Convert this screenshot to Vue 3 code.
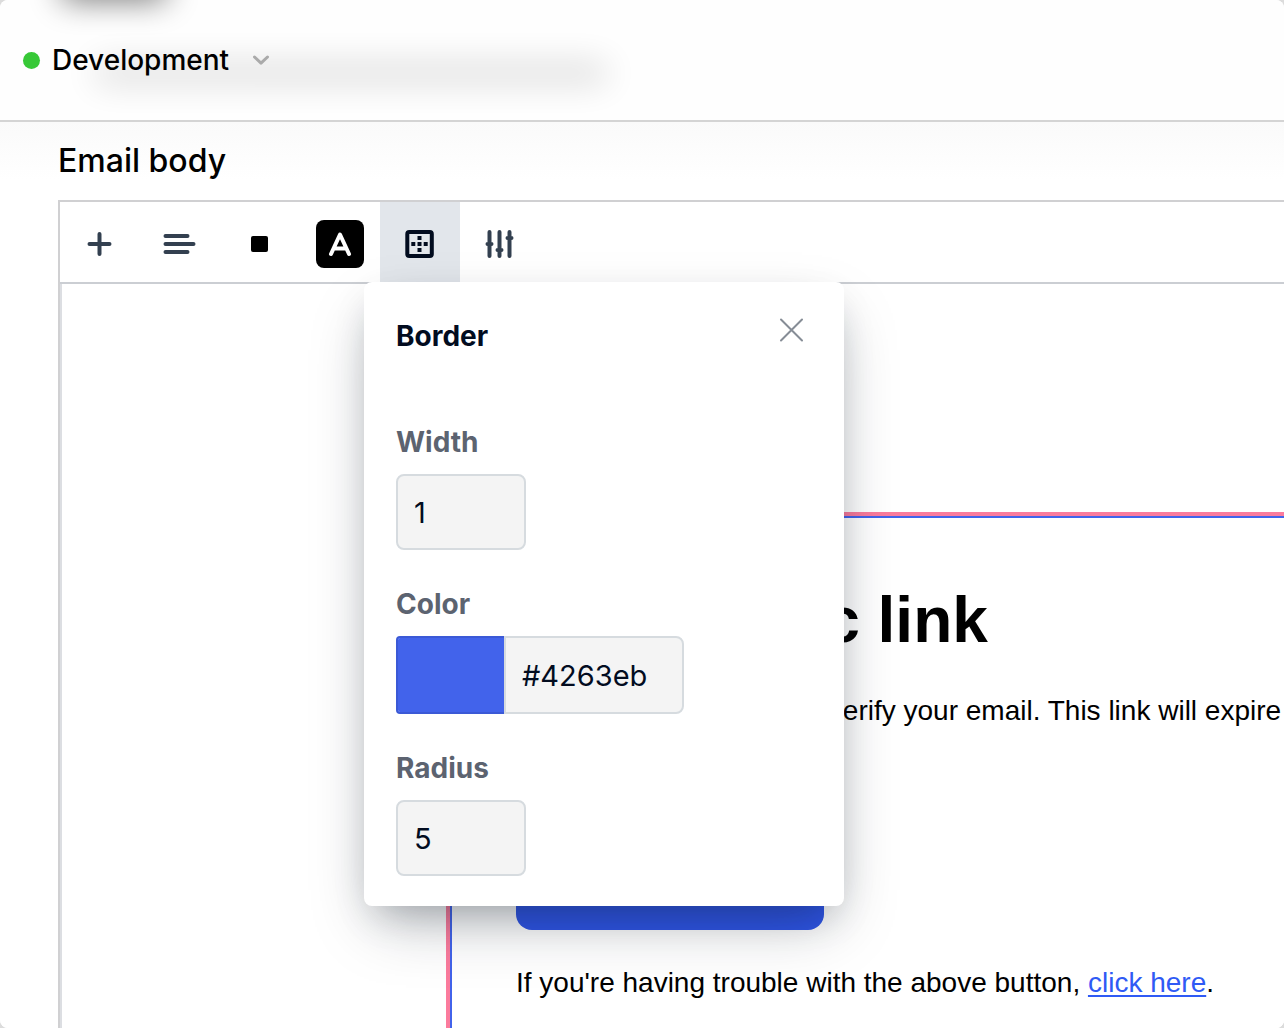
<script setup>
import { ref } from 'vue'

const borderWidth = ref('1')
const borderColor = ref('#4263eb')
const borderRadius = ref('5')
const popoverOpen = ref(true)
</script>

<template>
  <div class="window">
    <header class="topbar">
      <div class="ghost ghost-title"></div>
      <div class="ghost ghost-text"></div>
      <button class="environment" type="button">
        <span class="status"></span>
        <span>Development</span>
        <svg class="chevron" width="20" height="20" viewBox="0 0 20 20" aria-hidden="true">
          <path d="M3.5 7 10 13.2 16.500 7" />
        </svg>
      </button>
    </header>

    <main class="content">
      <h2 class="section-title">Email body</h2>

      <section class="editor">
        <div class="toolbar">
          <button class="tool" type="button" aria-label="Add block">
            <svg class="line-icon" width="40" height="40" viewBox="0 0 40 40">
              <path d="M19.500 10v20M9.500 20h20" />
            </svg>
          </button>
          <button class="tool" type="button" aria-label="Align">
            <svg class="line-icon" width="40" height="40" viewBox="0 0 40 40">
              <path d="M5.500 12h22M5.500 20h28M5.500 28h22" />
            </svg>
          </button>
          <button class="tool" type="button" aria-label="Background color">
            <svg width="40" height="40" viewBox="0 0 40 40">
              <rect x="11" y="12" width="17" height="16" rx="2" />
            </svg>
          </button>
          <button class="tool" type="button" aria-label="Text color">
            <svg class="letter-icon" width="48" height="48" viewBox="0 0 48 48">
              <rect width="48" height="48" rx="8" />
              <path d="M15 34 24 14.500 33 34M18.500 28.500h11" />
            </svg>
          </button>
          <div class="tool-group">
            <button
              class="tool active"
              type="button"
              aria-label="Border"
              @click="popoverOpen = !popoverOpen"
            >
              <svg width="40" height="40" viewBox="0 0 40 40">
                <rect class="frame" x="7.300" y="8" width="24.500" height="24" rx="2" />
                <path
                  class="dots"
                  d="M17.500 12h4v4h-4zM11.300 18h4v4h-4zM17.500 18h4v4h-4zM23.700 18h4v4h-4zM17.500 24h4v4h-4z"
                />
              </svg>
            </button>

            <form v-if="popoverOpen" class="popover" @submit.prevent>
              <div class="popover-head">
                <h3 class="popover-title">Border</h3>
                <button
                  class="close"
                  type="button"
                  aria-label="Close"
                  @click="popoverOpen = false"
                >
                  <svg width="40" height="40" viewBox="0 0 40 40">
                    <path d="M9 9.500l21 21M30 9.500l-21 21" />
                  </svg>
                </button>
              </div>
              <div class="fields">
                <div class="field">
                  <label for="border-width">Width</label>
                  <input id="border-width" v-model="borderWidth" class="box small" type="text" />
                </div>
                <div class="field">
                  <label for="border-color">Color</label>
                  <div class="color-row">
                    <input
                      v-model="borderColor"
                      class="swatch"
                      type="color"
                      aria-label="Pick border color"
                    />
                    <input id="border-color" v-model="borderColor" class="box hex" type="text" />
                  </div>
                </div>
                <div class="field">
                  <label for="border-radius">Radius</label>
                  <input id="border-radius" v-model="borderRadius" class="box small" type="text" />
                </div>
              </div>
            </form>
          </div>
          <button class="tool" type="button" aria-label="Settings">
            <svg class="line-icon" width="40" height="40" viewBox="0 0 40 40">
              <path d="M9.500 8v24M19.500 8v24M29.500 8v24M7.500 20h4M17.500 26h4M27.500 14h4" />
            </svg>
          </button>
        </div>

        <div class="canvas">
          <article class="email">
            <h1>Your magic link</h1>
            <p class="intro">Click the button below to verify your email. This link will expire</p>
            <button class="cta" type="button" aria-label="Verify"></button>
            <p>If you're having trouble with the above button, <a href="#">click here</a>.</p>
          </article>
        </div>
      </section>
    </main>
  </div>
</template>

<style>
body {
  margin: 0;
  background: #dcdcdc;
}
</style>

<style scoped>
* {
  box-sizing: border-box;
}

.window {
  display: flex;
  flex-direction: column;
  height: 100vh;
  overflow: hidden;
  border-radius: 8px;
  background: #fff;
  color: #000;
  font-family: Inter, "Liberation Sans", sans-serif;
}

h1,
h2,
h3,
p {
  margin: 0;
}

button {
  border: 0;
  padding: 0;
  background: none;
  color: inherit;
  font: inherit;
  cursor: pointer;
}

.topbar {
  position: relative;
  flex: none;
  display: flex;
  align-items: center;
  height: 122px;
  padding-left: 23px;
  overflow: hidden;
  border-bottom: 2px solid #d4d4d4;
  background: #fefefe;
}

.ghost {
  position: absolute;
  background: #000;
}

.ghost-title {
  top: -34px;
  left: 62px;
  width: 104px;
  height: 34px;
  opacity: 0.55;
  filter: blur(16px);
}

.ghost-text {
  top: 64px;
  left: 96px;
  width: 510px;
  height: 18px;
  opacity: 0.16;
  filter: blur(17px);
}

.environment {
  position: relative;
  display: flex;
  align-items: center;
  font-size: 28px;
  line-height: 40px;
  font-weight: 500;
}

.status {
  width: 17px;
  height: 17px;
  margin-right: 12px;
  border-radius: 50%;
  background: #37c837;
}

.chevron {
  margin-left: 22px;
  fill: none;
  stroke: #aaa;
  stroke-width: 3;
  stroke-linecap: round;
  stroke-linejoin: round;
}

.content {
  flex: 1;
  display: flex;
  flex-direction: column;
  min-height: 0;
  padding: 18px 0 0 58px;
  background: linear-gradient(#fafafa, #fff 58px);
}

.section-title {
  font-size: 32px;
  line-height: 42px;
  font-weight: 500;
}

.editor {
  flex: 1;
  display: flex;
  flex-direction: column;
  margin-top: 18px;
  border-top: 2px solid #d0d0d2;
  border-left: 2px solid #d0d0d2;
  background: #fff;
}

.toolbar {
  position: relative;
  z-index: 1;
  flex: none;
  display: flex;
  height: 82px;
  border-bottom: 2px solid #cbced3;
}

.tool {
  display: flex;
  align-items: center;
  justify-content: center;
  width: 80px;
  height: 80px;
  padding-top: 4px;
}

.tool-group {
  position: relative;
}

.active {
  background: #e2e6eb;
}

.line-icon {
  fill: none;
  stroke: #334050;
  stroke-width: 4;
  stroke-linecap: round;
}

.letter-icon path {
  fill: none;
  stroke: #fff;
  stroke-width: 4;
  stroke-linecap: round;
  stroke-linejoin: round;
}

.frame {
  fill: none;
  stroke: #020c1f;
  stroke-width: 4;
}

.dots {
  fill: #020c1f;
}

.popover {
  position: absolute;
  top: 80px;
  left: -16px;
  width: 480px;
  padding: 28px 32px 30px;
  border-radius: 8px;
  background: #fff;
  color: #020c1f;
  box-shadow:
    0 26px 60px -12px rgba(14, 26, 40, 0.28),
    0 16px 36px -12px rgba(14, 26, 40, 0.26);
}

.popover-head {
  display: flex;
  align-items: flex-start;
  justify-content: space-between;
}

.popover-title {
  font-size: 28px;
  line-height: 52px;
  font-weight: 700;
}

.close {
  width: 40px;
  height: 40px;
}

.close path {
  fill: none;
  stroke: #868d96;
  stroke-width: 2;
  stroke-linecap: round;
}

.fields {
  display: flex;
  flex-direction: column;
  gap: 38px;
  margin-top: 64px;
}

.field {
  display: flex;
  flex-direction: column;
  align-items: flex-start;
  gap: 16px;
}

label {
  color: #5c6370;
  font-size: 28px;
  line-height: 32px;
  font-weight: 700;
}

.box {
  height: 76px;
  padding: 0 16px;
  border: 2px solid #d6dbdf;
  border-radius: 8px;
  background: #f4f4f4;
  color: #020c1f;
  font: inherit;
  font-size: 29px;
}

.small {
  width: 130px;
}

.color-row {
  display: flex;
}

.swatch {
  width: 108px;
  height: 78px;
  padding: 0;
  border: 2px solid #3b59d6;
  border-right: 0;
  border-radius: 4px 0 0 4px;
  background: #4263eb;
  appearance: none;
}

.swatch::-webkit-color-swatch-wrapper {
  padding: 0;
}

.swatch::-webkit-color-swatch {
  border: 0;
}

.hex {
  width: 180px;
  height: 78px;
  border-radius: 0 8px 8px 0;
}

.canvas {
  flex: 1;
  min-height: 0;
  padding: 232px 0 0 388px;
  border-left: 2px solid #dcdee2;
}

.email {
  height: 100%;
  padding: 62px 0 0 64px;
  border-top: 2px solid #4263eb;
  border-left: 2px solid #4263eb;
  outline: 4px solid #fb7b9d;
  font-family: "Liberation Sans", Arial, sans-serif;
  font-size: 28px;
  line-height: 40px;
  white-space: nowrap;
}

.email h1 {
  font-size: 64px;
  line-height: 80px;
  font-weight: 700;
}

.intro {
  margin-top: 31px;
}

.cta {
  display: block;
  width: 308px;
  height: 96px;
  margin: 103px 0 33px;
  border-radius: 16px;
  background: #2f55e8;
}

.email a {
  color: #2f5af5;
  text-decoration-thickness: 2px;
  text-underline-offset: 3px;
}
</style>
